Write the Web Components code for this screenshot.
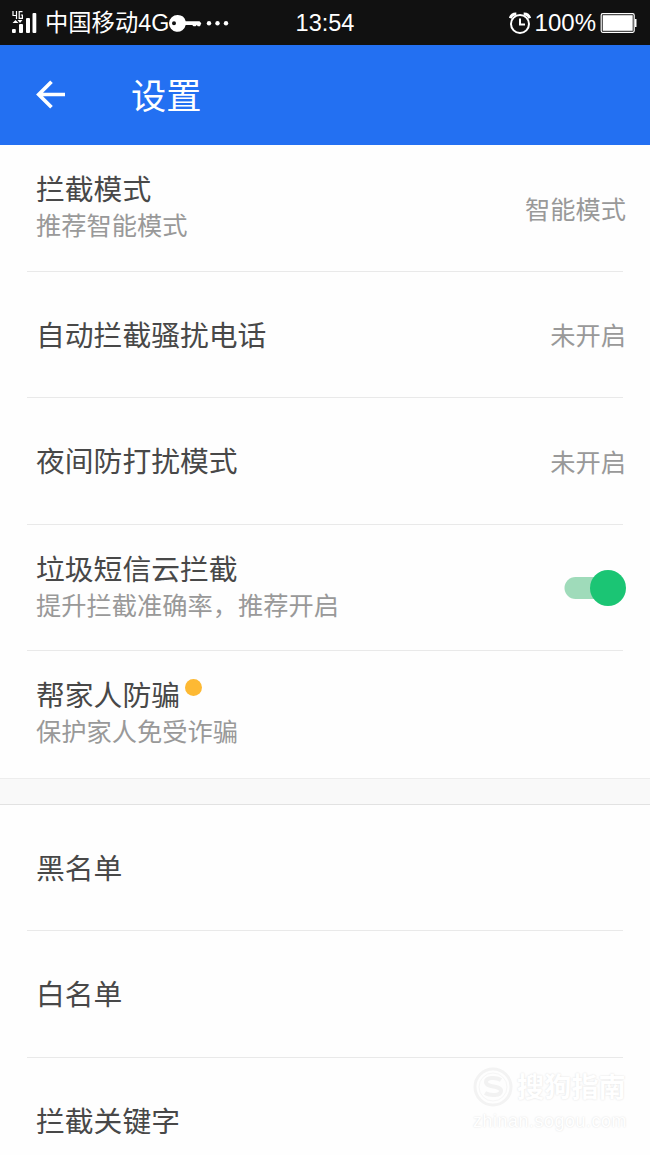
<!DOCTYPE html>
<html lang="zh-CN">
<head>
<meta charset="utf-8">
<meta name="viewport" content="width=device-width, initial-scale=1">
<title>设置</title>
<style>
  html, body { margin: 0; height: 1155px; overflow: hidden; }
  body {
    background: #fefefe;
    font-family: "Liberation Sans", "Noto Sans CJK SC", sans-serif;
  }
</style>
</head>
<body>
<settings-page>
  <status-bar slot="top" carrier="中国移动4G" time="13:54" battery="100%"></status-bar>
  <title-bar slot="top">设置</title-bar>

  <settings-group>
    <settings-row value="智能模式" sub="推荐智能模式">拦截模式</settings-row>
    <settings-row value="未开启">自动拦截骚扰电话</settings-row>
    <settings-row value="未开启">夜间防打扰模式</settings-row>
    <settings-row sub="提升拦截准确率，推荐开启">垃圾短信云拦截<toggle-switch slot="end"></toggle-switch></settings-row>
    <settings-row sub="保护家人免受诈骗" dot>帮家人防骗</settings-row>
  </settings-group>
  <settings-group>
    <settings-row>黑名单</settings-row>
    <settings-row>白名单</settings-row>
    <settings-row>拦截关键字</settings-row>
  </settings-group>

  <site-mark slot="over" name="搜狗指南" url="zhinan.sogou.com"></site-mark>
</settings-page>

<script>
(function () {
  class BaseElement extends HTMLElement {
    constructor() {
      super();
      this.attachShadow({ mode: 'open' });
    }

    connectedCallback() {
      this.shadowRoot.innerHTML = this.template();
    }
  }

  class SettingsPage extends BaseElement {
    template() {
      return `
        <style>
          :host { display: block; position: relative; width: 650px; height: 1155px; overflow: hidden; }
          main { display: flex; flex-direction: column; gap: 27px; background: #f9f9f9; }
        </style>
        <slot name="top"></slot>
        <main><slot></slot></main>
        <slot name="over"></slot>
      `;
    }
  }

  class StatusBar extends BaseElement {
    template() {
      return `
        <style>
          :host {
            display: grid;
            grid-template-columns: 1fr auto 1fr;
            align-items: center;
            height: 45px;
            box-sizing: border-box;
            padding: 0 12px 0 12px;
            background: #111;
            color: #fff;
            font-size: 23.5px;
            line-height: 44px;
            white-space: nowrap;
          }
          div { display: flex; align-items: center; height: 44px; }
          .right { justify-content: flex-end; }
          .battery { font-size: 24px; }
          .carrier { font-size: 23.3px; }
          svg { display: block; flex: none; }
          .signal { margin-right: 7px; }
          .alarm { margin-right: 2px; }
          .cell { margin-left: 4px; }
        </style>
        <div>
          <svg class="signal" width="26" height="44" viewBox="0 0 26 44" fill="#fff">
            <path d="M1 10v4.500h4M4.500 10v8M10.500 10.600H7.200v6.800h3.200V14H8.800" fill="none" stroke="#fff" stroke-width="1.200"/>
            <path d="M0.500 22l3-3 3 3zM5.500 19h5l-2.500 3z"/>
            <rect x="0" y="28" width="3.800" height="4" rx="1"/>
            <rect x="7" y="23" width="4" height="9" rx="1"/>
            <rect x="14" y="17" width="4" height="15" rx="1"/>
            <rect x="20.500" y="12" width="3.800" height="20" rx="1"/>
          </svg>
          <span class="carrier">${this.getAttribute('carrier')}</span>
          <svg width="61" height="44" viewBox="0 0 61 44" fill="#fff">
            <path fill-rule="evenodd" d="M8.500 14a8.300 8.300 0 0 1 8.200 6.200H30.500l1.800 2-1.300 3h-2.200l-1-1.200-1.300 1.200H24.500l-1.300-1.200H16.700A8.400 8.400 0 1 1 8.500 14zM5 20.300a2 2 0 1 0 0 4 2 2 0 0 0 0-4z"/>
            <circle cx="40" cy="22.300" r="2.200"/>
            <circle cx="48.500" cy="22.300" r="2.200"/>
            <circle cx="57" cy="22.300" r="2.200"/>
          </svg>
        </div>
        <span>${this.getAttribute('time')}</span>
        <div class="right">
          <svg class="alarm" width="24" height="44" viewBox="0 0 24 44" fill="none" stroke="#fff" stroke-width="2">
            <circle cx="11" cy="23" r="9"/>
            <path d="M11 17.500v6h5"/>
            <path d="M1.300 17.200a6 6 0 0 1 6-4.200M20.700 17.200a6 6 0 0 0-6-4.200" stroke-width="3"/>
          </svg>
          <span class="battery">${this.getAttribute('battery')}</span>
          <svg class="cell" width="38" height="44" viewBox="0 0 38 44">
            <rect x="1.200" y="12.700" width="33" height="18.600" rx="1.500" fill="none" stroke="#fff" stroke-width="1.200"/>
            <rect x="2.700" y="14.200" width="30" height="15.600" fill="#fff"/>
            <path d="M35 18h1.500v8H35z" fill="#fff"/>
          </svg>
        </div>
      `;
    }
  }

  class TitleBar extends BaseElement {
    template() {
      return `
        <style>
          :host {
            display: flex;
            align-items: center;
            gap: 65px;
            height: 100px;
            box-sizing: border-box;
            padding-left: 35px;
            background: #2370f2;
            color: #fff;
            font-size: 35.2px;
            line-height: 50px;
          }
          .text { padding-top: 3px; }
        </style>
        <svg width="31" height="30" viewBox="0 0 31 30" fill="none" stroke="#fff" stroke-width="3.700">
          <path d="M30 14.500H4M16.500 1.700L3.700 14.500l12.800 12.800"/>
        </svg>
        <span class="text"><slot></slot></span>
      `;
    }
  }

  class SettingsGroup extends BaseElement {
    template() {
      return `
        <style>
          :host {
            display: block;
            background: #fefefe;
            box-shadow: 0 -1px #e2e2e2;
          }
          :host(:first-child), :host(:first-of-type) { box-shadow: 0 1px #ededed; }
          ::slotted(settings-row:last-child) { --line: transparent; }
        </style>
        <slot></slot>
      `;
    }
  }

  class SettingsRow extends BaseElement {
    template() {
      const sub = this.getAttribute('sub');
      const value = this.getAttribute('value');

      return `
        <style>
          :host {
            display: flex;
            flex-direction: column;
            height: 126.5px;
          }
          .body {
            flex: 1;
            display: flex;
            align-items: center;
            justify-content: space-between;
            padding: 0 24px 0 36px;
          }
          .title {
            display: flex;
            color: #484848;
            font-size: 28.8px;
            line-height: 38px;
          }
          .single { padding-top: 3px; }
          .sub, .value { color: #999; font-size: 25.25px; line-height: 35px; }
          .value { padding-top: 5px; }
          .dot {
            width: 17px;
            height: 17px;
            margin: 2px 0 0 5px;
            border-radius: 50%;
            background: #fdb933;
          }
          .line { height: 1px; margin: 0 27px; background: var(--line, #e9e9e9); }
        </style>
        <div class="body">
          <div>
            <div class="title ${sub ? '' : 'single'}"><slot></slot>${this.hasAttribute('dot') ? '<i class="dot"></i>' : ''}</div>
            ${sub ? `<div class="sub">${sub}</div>` : ''}
          </div>
          ${value ? `<span class="value">${value}</span>` : ''}
          <slot name="end"></slot>
        </div>
        <div class="line"></div>
      `;
    }
  }

  class ToggleSwitch extends BaseElement {
    template() {
      return `
        <style>
          :host { display: block; padding-top: 2px; }
          svg { display: block; }
        </style>
        <svg width="62" height="36" viewBox="0 0 62 36">
          <rect x="0.500" y="7" width="50" height="22" rx="11" fill="#9fdbba"/>
          <circle cx="44" cy="18" r="18" fill="#1bc574"/>
        </svg>
      `;
    }
  }

  // Faint mark floating over the bottom right corner of the list
  class SiteMark extends BaseElement {
    template() {
      return `
        <style>
          :host {
            position: absolute;
            right: 23px;
            bottom: 22px;
            width: 154px;
            color: #fff;
            text-shadow: 0 0 2px #ddd;
            font-weight: bold;
            white-space: nowrap;
          }
          .name { display: flex; align-items: center; gap: 4px; font-size: 27.2px; line-height: 42px; }
          .url { font-size: 17.8px; line-height: 24px; font-weight: normal; letter-spacing: 0.6px; }
        </style>
        <div class="name">
          <svg width="40" height="42" viewBox="0 0 40 42" fill="none">
            <circle cx="20" cy="20" r="18" stroke="#f3f3f3" stroke-width="3"/>
            <circle cx="20" cy="20" r="14" stroke="#f6f6f6" stroke-width="1"/>
            <path d="M28 13c-5-3-15-3-15 2 0 6 15 3 15 9 0 5-11 5-16 2" stroke="#f2f2f2" stroke-width="4"/>
          </svg>
          <span>${this.getAttribute('name')}</span>
        </div>
        <div class="url">${this.getAttribute('url')}</div>
      `;
    }
  }

  customElements.define('settings-page', SettingsPage);
  customElements.define('status-bar', StatusBar);
  customElements.define('title-bar', TitleBar);
  customElements.define('settings-group', SettingsGroup);
  customElements.define('settings-row', SettingsRow);
  customElements.define('toggle-switch', ToggleSwitch);
  customElements.define('site-mark', SiteMark);
})();
</script>
</body>
</html>
